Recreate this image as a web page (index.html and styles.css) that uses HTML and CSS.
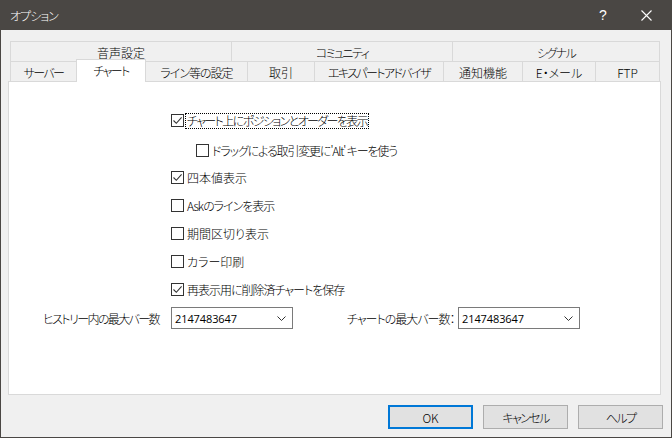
FILE: index.html
```html
<!DOCTYPE html>
<html lang="ja">
<head>
<meta charset="UTF-8" />
<title>オプション</title>
<link rel="stylesheet" href="styles.css">
</head>
<body>

<div class="window">
  <div class="titlebar">
    <span class="title ls-1">オプション</span>
    <span class="title-help">?</span>
    <span class="title-close">
      <svg viewBox="0 0 11 11" xmlns="http://www.w3.org/2000/svg">
        <path d="M0.5 0.5 L10.5 10.5 M10.5 0.5 L0.5 10.5" />
      </svg>
    </span>
  </div>

  <div class="content">
    <div class="tabs">
      <div class="tab-row">
        <div class="tab w-sound">音声設定</div>
        <div class="tab w-community ls-2">コミュニティ</div>
        <div class="tab w-signal last ls-2">シグナル</div>
      </div>
      <div class="tab-row">
        <div class="tab w-server ls-2">サーバー</div>
        <div class="tab w-chart active ls-2">チャート</div>
        <div class="tab w-line no-left ls-1">ライン等の設定</div>
        <div class="tab w-trade">取引</div>
        <div class="tab w-ea ls-2">エキスパートアドバイザ</div>
        <div class="tab w-notify">通知機能</div>
        <div class="tab w-mail">E・メール</div>
        <div class="tab w-ftp last">FTP</div>
      </div>
    </div>

    <div class="panel">
      <div class="checks">
        <label class="check row-first">
          <span class="box checked">
            <svg viewBox="0 0 11 11"><path d="M1.5 5.5 L4.3 8.3 L9.6 2.4" /></svg>
          </span>
          <span class="text focus ls-2">チャート上にポジションとオーダーを表示</span>
        </label>
        <label class="check row-sub">
          <span class="box"></span>
          <span class="text ls-15">ドラッグによる取引変更に'Alt' キーを使う</span>
        </label>
        <label class="check">
          <span class="box checked">
            <svg viewBox="0 0 11 11"><path d="M1.5 5.5 L4.3 8.3 L9.6 2.4" /></svg>
          </span>
          <span class="text">四本値表示</span>
        </label>
        <label class="check">
          <span class="box"></span>
          <span class="text ls-1">Askのラインを表示</span>
        </label>
        <label class="check">
          <span class="box"></span>
          <span class="text">期間区切り表示</span>
        </label>
        <label class="check">
          <span class="box"></span>
          <span class="text">カラー印刷</span>
        </label>
        <label class="check">
          <span class="box checked">
            <svg viewBox="0 0 11 11"><path d="M1.5 5.5 L4.3 8.3 L9.6 2.4" /></svg>
          </span>
          <span class="text ls-1">再表示用に削除済チャートを保存</span>
        </label>
      </div>

      <div class="limits">
        <span class="limit-label l-history ls-2">ヒストリー内の最大バー数</span>
        <div class="combo">
          <span>2147483647</span>
          <svg viewBox="0 0 9 5"><path d="M0.5 0.5 L4.5 4.5 L8.5 0.5" /></svg>
        </div>
        <span class="limit-label l-chart ls-1">チャートの最大バー数：</span>
        <div class="combo">
          <span>2147483647</span>
          <svg viewBox="0 0 9 5"><path d="M0.5 0.5 L4.5 4.5 L8.5 0.5" /></svg>
        </div>
      </div>
    </div>

    <div class="buttons">
      <button class="btn default">OK</button>
      <button class="btn ls-2">キャンセル</button>
      <button class="btn ls-2">ヘルプ</button>
    </div>
  </div>
</div>

</body>
</html>
```

FILE: styles.css
```css
html, body {
  margin: 0;
  padding: 0;
}

body {
  width: 672px;
  height: 438px;
  overflow: hidden;
  font-family: "Noto Sans CJK JP", "Noto Sans", sans-serif;
  font-size: 12px;
  font-weight: 300;
  font-feature-settings: "palt";
  color: #000;
}

/* stringe il testo con molti kana (il font originale e' piu' stretto) */
.ls-1 { letter-spacing: -1px; }
.ls-15 { letter-spacing: -1.15px; }
.ls-2 { letter-spacing: -1.6px; }

.window {
  box-sizing: border-box;
  width: 672px;
  height: 438px;
  background: #f0f0f0;
  border: 1px solid #4a4744;
  border-top: none;
  display: flex;
  flex-direction: column;
}

/* barra del titolo */
.titlebar {
  height: 30px;
  margin: 0 -1px;
  background: #4a4744;
  color: #fff;
  display: flex;
  align-items: center;
  padding-left: 10px;
}

.title {
  flex-grow: 1;
  font-size: 12px;
}

.title-help {
  flex: 0 0 46px;
  text-align: center;
  font-family: "Liberation Sans", sans-serif;
  font-size: 14px;
}

.title-close {
  flex: 0 0 46px;
  box-sizing: border-box;
  display: flex;
  justify-content: flex-end;
  align-items: center;
  padding-right: 20px;
}

.title-close svg {
  width: 11px;
  height: 11px;
  stroke: #fff;
  stroke-width: 1.1;
  fill: none;
}

.content {
  flex-grow: 1;
  display: flex;
  flex-direction: column;
  padding: 11px 10px 0 7px;
}

/* schede */
.tabs {
  padding-left: 2px;
}

.tab-row {
  display: flex;
  height: 20px;
}

.tab {
  box-sizing: border-box;
  height: 20px;
  border-top: 1px solid #d9d9d9;
  border-left: 1px solid #d9d9d9;
  display: flex;
  align-items: center;
  justify-content: center;
  white-space: nowrap;
  padding-top: 1px;
}

.tab.last {
  border-right: 1px solid #d9d9d9;
}

.tab.no-left {
  border-left: none;
}

.tab.active {
  position: relative;
  z-index: 2;
  height: 23px;
  margin-top: -2px;
  background: #fff;
  border-right: 1px solid #d9d9d9;
  padding-bottom: 3px;
}

.w-sound { width: 221px; }
.w-community { width: 221px; }
.w-signal { width: 208px; }
.w-server { width: 66px; }
.w-chart { width: 70px; }
.w-line { width: 101px; }
.w-trade { width: 67px; }
.w-ea { width: 129px; }
.w-notify { width: 79px; }
.w-mail { width: 73px; word-spacing: 2px; }
.w-ftp { width: 65px; }

.panel {
  box-sizing: border-box;
  width: 653px;
  height: 314px;
  background: #fff;
  border: 1px solid #d9d9d9;
  display: flex;
  flex-direction: column;
  padding-top: 30px;
}

.checks {
  display: flex;
  flex-direction: column;
  gap: 11px;
  padding-left: 162px;
}

.check {
  display: flex;
  align-items: center;
  height: 17px;
}

.check.row-first {
  margin-bottom: 2px;
}

.check.row-sub {
  padding-left: 25px;
  margin-bottom: -1px;
}

.box {
  box-sizing: border-box;
  width: 13px;
  height: 13px;
  border: 1px solid #333;
  background: #fff;
  display: flex;
  align-items: center;
  justify-content: center;
  margin-right: 1px;
}

.box svg {
  width: 11px;
  height: 11px;
  stroke: #333;
  stroke-width: 1.1;
  fill: none;
}

.text {
  padding: 0 1px;
  border: 1px solid transparent;
  line-height: 14px;
}

.text.focus {
  border: 1px dotted #000;
}

.limits {
  display: flex;
  align-items: center;
  margin-top: 9px;
  padding-left: 34px;
}

.limit-label {
  white-space: nowrap;
}

.l-history { width: 128px; }
.l-chart { width: 111px; margin-left: 54px; }

.combo {
  box-sizing: border-box;
  width: 122px;
  height: 22px;
  border: 1px solid #7a7a7a;
  background: #fff;
  display: flex;
  align-items: center;
  justify-content: space-between;
  padding: 0 6px 0 3px;
  font-family: "Open Sans", sans-serif;
  font-size: 11px;
  font-weight: 400;
  letter-spacing: -0.1px;
}

.combo svg {
  width: 9px;
  height: 5px;
  stroke: #333;
  stroke-width: 1;
  fill: none;
}

/* pulsanti */
.buttons {
  display: flex;
  justify-content: flex-end;
  gap: 10px;
  margin-top: 10px;
  margin-right: -2px;
}

.btn {
  box-sizing: border-box;
  width: 85px;
  height: 24px;
  background: #e1e1e1;
  border: 1px solid #adadad;
  font-family: "Noto Sans CJK JP", "Noto Sans", sans-serif;
  font-size: 12px;
  font-weight: 300;
  font-feature-settings: "palt";
  color: #000;
  padding: 0;
}

.btn.default {
  border: 2px solid #0078d7;
}
```
